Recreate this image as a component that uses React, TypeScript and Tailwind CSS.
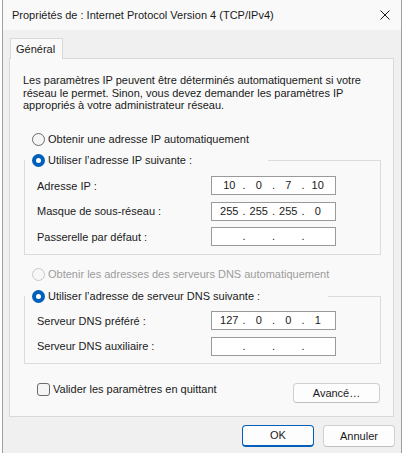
import React from "react";

const font = { fontFamily: '"Liberation Sans", Arial, sans-serif' };

function Radio({ checked, disabled }: { checked?: boolean; disabled?: boolean }) {
  if (checked) {
    return (
      <div className="w-[13px] h-[13px] rounded-full bg-[#005fb8] flex items-center justify-center shrink-0">
        <div className="w-[5px] h-[5px] rounded-full bg-white" />
      </div>
    );
  }
  return (
    <div
      className={
        disabled
          ? "w-[13px] h-[13px] rounded-full border border-[#c8c8c8] bg-[#f7f7f7] shrink-0"
          : "w-[13px] h-[13px] rounded-full border border-[#6b6b6b] bg-[#f5f5f5] shrink-0"
      }
    />
  );
}

function IpField({ parts }: { parts: string[] }) {
  return (
    <div className="w-[125px] h-[19px] border border-[#9a9a9a] bg-white flex items-center px-[5px] text-[11px] text-[#1a1a1a]">
      {parts.map((p, i) => (
        <React.Fragment key={i}>
          <div className="w-[25px] text-center leading-[17px]">{p}</div>
          {i < 3 && <div className="w-[5px] text-center leading-[17px]">.</div>}
        </React.Fragment>
      ))}
    </div>
  );
}

function Row({ label, parts }: { label: string; parts: string[] }) {
  return (
    <div className="flex items-center h-[19px] pl-[12px]">
      <div className="w-[174px] text-[11px] text-[#1a1a1a] pt-[1px]">{label}</div>
      <IpField parts={parts} />
    </div>
  );
}

function Group({
  legend,
  legendWidth,
  height,
  rowsTop,
  rows,
}: {
  legend: string;
  legendWidth: string;
  height: string;
  rowsTop: string;
  rows: { label: string; parts: string[] }[];
}) {
  return (
    <fieldset className={`ml-[14px] w-[357px] ${height} border border-[#dcdcdc]`}>
      <legend className={`${legendWidth} h-[16px] pl-[7px] flex items-center gap-[3px] bg-[#f9f9f9]`}>
        <Radio checked />
        <span className="text-[11px] text-[#1a1a1a] leading-[16px]">{legend}</span>
      </legend>
      <div className={`flex flex-col gap-[6.5px] ${rowsTop}`}>
        {rows.map((r, i) => (
          <Row key={i} label={r.label} parts={r.parts} />
        ))}
      </div>
    </fieldset>
  );
}

function Button({ children, primary, w }: { children: React.ReactNode; primary?: boolean; w: string }) {
  return (
    <div
      className={`${w} flex items-center justify-center rounded-[4px] bg-[#fdfdfd] text-[11px] text-[#1a1a1a] ${
        primary ? "border border-[#005fb8] border-b-2" : "border border-[#d0d0d0] border-b-[#c0c0c0]"
      }`}
    >
      {children}
    </div>
  );
}

export default function App() {
  return (
    <div className="w-[404px] h-[453px] bg-white overflow-hidden" style={font}>
      <div className="ml-[2px] w-[400px] h-[453px] border-x border-[#a0a0a0] bg-[#f0f0f0] flex flex-col">
        {/* Title bar */}
        <div className="h-[30px] shrink-0 bg-[#f9f9f9] flex items-center justify-between pl-[9px] pr-[11px]">
          <span className="text-[11px] text-[#1a1a1a]">Propriétés de : Internet Protocol Version 4 (TCP/IPv4)</span>
          <svg width="10" height="10" viewBox="0 0 10 10">
            <path d="M0.5 0.5 L9.5 9.5 M9.5 0.5 L0.5 9.5" stroke="#1a1a1a" strokeWidth="1" fill="none" />
          </svg>
        </div>

        {/* Body */}
        <div className="flex flex-col pt-[8px] pl-[6px]">
          <div className="ml-[1px] w-[53px] h-[21px] border border-b-0 border-[#d9d9d9] bg-[#f9f9f9] -mb-px relative z-10 flex items-center pl-[5px] text-[11px] text-[#1a1a1a]">
            Général
          </div>
          <div className="w-[385px] h-[359px] border border-[#d9d9d9] bg-[#f9f9f9] flex flex-col">
            <p className="mt-[15px] pl-[13px] text-[11px] leading-[12.7px] text-[#1a1a1a]">
              Les paramètres IP peuvent être déterminés automatiquement si votre
              <br />
              réseau le permet. Sinon, vous devez demander les paramètres IP
              <br />
              appropriés à votre administrateur réseau.
            </p>

            <div className="mt-[19px] ml-[22px] h-[16px] flex items-center gap-[3px]">
              <Radio />
              <span className="text-[11px] text-[#1a1a1a]">Obtenir une adresse IP automatiquement</span>
            </div>

            <div className="mt-[5px]">
              <Group
                legend="Utiliser l’adresse IP suivante :"
                legendWidth="w-[243px]"
                height="h-[103px]"
                rowsTop="mt-[8px]"
                rows={[
                  { label: "Adresse IP :", parts: ["10", "0", "7", "10"] },
                  { label: "Masque de sous-réseau :", parts: ["255", "255", "255", "0"] },
                  { label: "Passerelle par défaut :", parts: ["", "", "", ""] },
                ]}
              />
            </div>

            <div className="mt-[11px] ml-[22px] h-[16px] flex items-center gap-[3px]">
              <Radio disabled />
              <span className="text-[11px] text-[#9c9c9c]">Obtenir les adresses des serveurs DNS automatiquement</span>
            </div>

            <div className="mt-[6px]">
              <Group
                legend="Utiliser l’adresse de serveur DNS suivante :"
                legendWidth="w-[303px]"
                height="h-[76px]"
                rowsTop="mt-[7px]"
                rows={[
                  { label: "Serveur DNS préféré :", parts: ["127", "0", "0", "1"] },
                  { label: "Serveur DNS auxiliaire :", parts: ["", "", "", ""] },
                ]}
              />
            </div>

            <div className="mt-[17px] flex items-start justify-between pl-[27px] pr-[13px]">
              <div className="h-[16px] flex items-center gap-[3px]">
                <div className="w-[13px] h-[13px] rounded-[3px] border border-[#6b6b6b] bg-[#f5f5f5]" />
                <span className="text-[11px] text-[#1a1a1a]">Valider les paramètres en quittant</span>
              </div>
              <div className="mt-[2px] h-[20px] flex">
                <Button w="w-[87px]">Avancé…</Button>
              </div>
            </div>
          </div>
        </div>

        {/* Footer */}
        <div className="mt-[8px] pr-[6px] flex justify-end gap-[9px] h-[22px] shrink-0">
          <Button primary w="w-[72px]">OK</Button>
          <Button w="w-[72px]">Annuler</Button>
        </div>
      </div>
    </div>
  );
}
